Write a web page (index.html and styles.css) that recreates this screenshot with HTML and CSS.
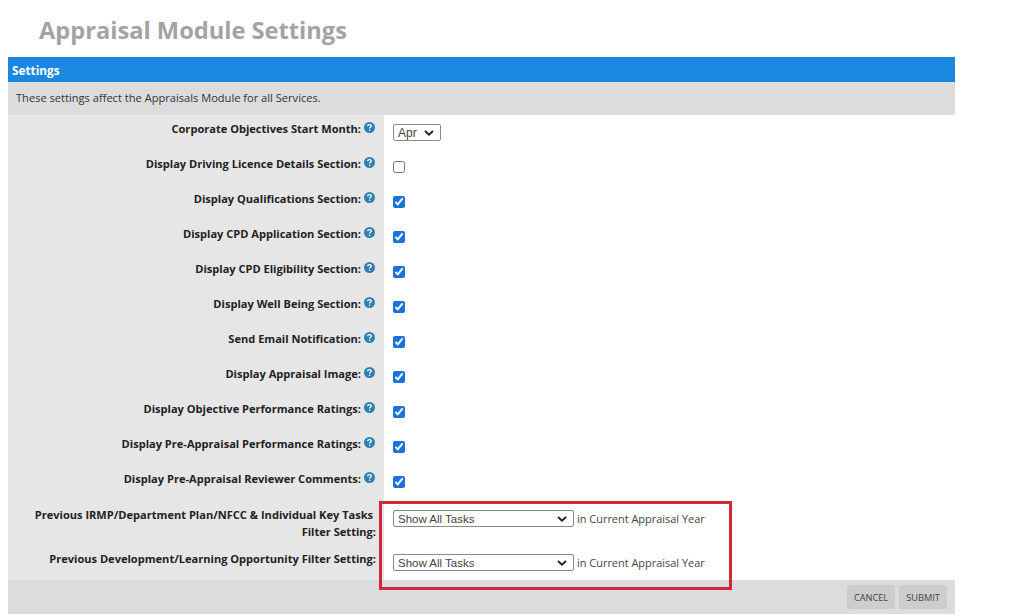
FILE: index.html
```html
<!DOCTYPE html>
<html lang="en">
<head>
<meta charset="utf-8">
<title>Appraisal Module Settings</title>
<link rel="stylesheet" href="styles.css">
</head>
<body>
<svg class="defs" width="0" height="0" aria-hidden="true"><symbol id="help" viewBox="0 0 12 12"><circle cx="6" cy="6" r="6" fill="#2f7fb5"/><path d="M4 4.6C4 3.4 4.9 2.8 6 2.8S8 3.4 8 4.4C8 5.7 6.1 5.7 6.1 7" fill="none" stroke="#fff" stroke-width="1.4"/><circle cx="6.1" cy="9" r=".9" fill="#fff"/></symbol></svg>
<h1 class="title">Appraisal Module Settings</h1>
<main class="panel">
  <div class="head">Settings</div>
  <div class="intro">These settings affect the Appraisals Module for all Services.</div>
  <div class="row"><div class="label">Corporate Objectives Start Month:<svg class="help"><use href="#help"/></svg></div><div class="field"><select class="month"><option>Apr</option></select></div></div>
  <div class="row"><div class="label">Display Driving Licence Details Section:<svg class="help"><use href="#help"/></svg></div><div class="field"><input class="check" type="checkbox"></div></div>
  <div class="row"><div class="label">Display Qualifications Section:<svg class="help"><use href="#help"/></svg></div><div class="field"><input class="check" type="checkbox" checked></div></div>
  <div class="row"><div class="label">Display CPD Application Section:<svg class="help"><use href="#help"/></svg></div><div class="field"><input class="check" type="checkbox" checked></div></div>
  <div class="row"><div class="label">Display CPD Eligibility Section:<svg class="help"><use href="#help"/></svg></div><div class="field"><input class="check" type="checkbox" checked></div></div>
  <div class="row"><div class="label">Display Well Being Section:<svg class="help"><use href="#help"/></svg></div><div class="field"><input class="check" type="checkbox" checked></div></div>
  <div class="row"><div class="label">Send Email Notification:<svg class="help"><use href="#help"/></svg></div><div class="field"><input class="check" type="checkbox" checked></div></div>
  <div class="row"><div class="label">Display Appraisal Image:<svg class="help"><use href="#help"/></svg></div><div class="field"><input class="check" type="checkbox" checked></div></div>
  <div class="row"><div class="label">Display Objective Performance Ratings:<svg class="help"><use href="#help"/></svg></div><div class="field"><input class="check" type="checkbox" checked></div></div>
  <div class="row"><div class="label">Display Pre-Appraisal Performance Ratings:<svg class="help"><use href="#help"/></svg></div><div class="field"><input class="check" type="checkbox" checked></div></div>
  <div class="row"><div class="label">Display Pre-Appraisal Reviewer Comments:<svg class="help"><use href="#help"/></svg></div><div class="field"><input class="check" type="checkbox" checked></div></div>
  <div class="row tall"><div class="label">Previous IRMP/Department Plan/NFCC &amp; Individual Key Tasks&nbsp;<br>Filter Setting:</div><div class="field"><select class="filter"><option>Show All Tasks</option></select><span class="note">in Current Appraisal Year</span></div></div>
  <div class="row last"><div class="label">Previous Development/Learning Opportunity Filter Setting:</div><div class="field"><select class="filter"><option>Show All Tasks</option></select><span class="note">in Current Appraisal Year</span></div></div>
  <div class="foot"><button class="btn" type="button">CANCEL</button><button class="btn" type="button">SUBMIT</button></div>
  <div class="marker"></div>
</main>
</body>
</html>
```

FILE: styles.css
```css
* { box-sizing: border-box; }
html, body { margin: 0; padding: 0; background: #fff; }
body { width: 1024px; height: 616px; overflow: hidden; font-family: "Open Sans", "Noto Sans", sans-serif; color: #2b2b2b; }
.defs { position: absolute; }
.title { margin: 0; padding: 12px 0 0 39px; height: 57px; font-size: 23.65px; line-height: 36px; font-weight: 700; color: #a3a3a3; }
.panel { position: relative; margin-left: 8px; width: 947px; }
.head { height: 25px; padding-left: 4px; background: #1a88e0; color: #fff; font-size: 11.8px; font-weight: 700; line-height: 26px; }
.intro { height: 33px; padding-left: 8px; background: #dcdcdc; font-size: 11.1px; line-height: 32px; color: #333; }
.row { display: grid; grid-template-columns: 376px 571px; height: 35px; }
.tall { height: 46px; }
.last { height: 34px; }
.label { background: #e6e6e6; padding: 5px 8px 0 0; text-align: right; font-size: 11.07px; font-weight: 700; line-height: 18px; color: #222; }
.tall .label { padding-top: 6px; line-height: 17px; }
.last .label { padding-top: 4px; }
.help { width: 11px; height: 11px; margin: 0 1px 0 3px; vertical-align: 0; }
.field { display: flex; align-items: flex-start; padding: 9px 0 0 9px; }
.tall .field { padding-top: 10px; }
.last .field { padding-top: 8px; }
.month, .filter { appearance: none; height: 17px; padding: 0 0 0 4px; background: #fff url("data:image/svg+xml,%3Csvg xmlns='http://www.w3.org/2000/svg' width='10' height='6'%3E%3Cpath d='M1 1l4 3.6L9 1' fill='none' stroke='%23222' stroke-width='1.9'/%3E%3C/svg%3E") no-repeat right 6px center; border: 1px solid #8a8a8a; border-radius: 2px; font-family: "Liberation Sans", sans-serif; color: #444; }
.month { width: 48px; font-size: 12px; }
.filter { width: 181px; font-size: 11.5px; }
.check { width: 12px; height: 12px; margin: 2px 0 0 0; accent-color: #1a73d9; }
.note { margin-left: 3px; font-size: 10.95px; line-height: 17px; color: #444; }
.foot { display: flex; justify-content: flex-end; gap: 4px; height: 34px; padding: 5px 8px 0 0; background: #dcdcdc; }
.btn { width: 48px; height: 24px; padding: 0; border: 0; border-radius: 3px; background: #cdcdcd; color: #444; font: 9.2px "Open Sans", sans-serif; }
.marker { position: absolute; left: 371px; top: 444px; width: 353px; height: 89px; border: 3px solid #d2283a; pointer-events: none; }
```
